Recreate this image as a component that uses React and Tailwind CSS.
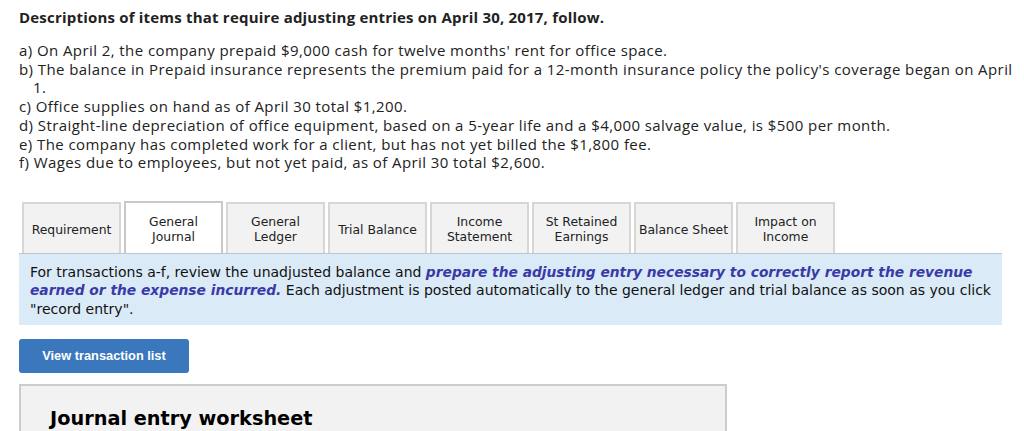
import React from 'react';

const items = [
  "a) On April 2, the company prepaid $9,000 cash for twelve months' rent for office space.",
  "b) The balance in Prepaid insurance represents the premium paid for a 12-month insurance policy the policy's coverage began on April 1.",
  'c) Office supplies on hand as of April 30 total $1,200.',
  'd) Straight-line depreciation of office equipment, based on a 5-year life and a $4,000 salvage value, is $500 per month.',
  'e) The company has completed work for a client, but has not yet billed the $1,800 fee.',
  'f) Wages due to employees, but not yet paid, as of April 30 total $2,600.',
];

const tabs = [
  ['Requirement'],
  ['General', 'Journal'],
  ['General', 'Ledger'],
  ['Trial Balance'],
  ['Income', 'Statement'],
  ['St Retained', 'Earnings'],
  ['Balance Sheet'],
  ['Impact on', 'Income'],
];

export default function App() {
  return (
    <div className="w-[1024px] h-[431px] overflow-hidden bg-white pl-[19px] pt-[7px]">
      <h1 className="text-[15px] tracking-[0.2px] leading-[20px] font-bold text-[#222] font-['Open_Sans',sans-serif]">
        Descriptions of items that require adjusting entries on April 30, 2017, follow.
      </h1>

      {/* item list */}
      <ul className="mt-[14px] w-[1005px] text-[15px] tracking-[0.42px] leading-[18.7px] text-[#222] font-['Open_Sans',sans-serif]">
        {items.map((t) => (
          <li key={t} className="pl-[14px] -indent-[14px]">{t}</li>
        ))}
      </ul>

      {/* tab strip */}
      <div className="mt-[29px] ml-[3px] flex items-end gap-[3px] font-['DejaVu_Sans',sans-serif] text-[12.4px] leading-[15px] text-[#222]">
        {tabs.map((lines, i) => {
          const active = i === 1;
          return (
            <div
              key={lines.join(' ')}
              className={
                active
                  ? 'w-[99px] h-[52px] pt-[2px] flex flex-col items-center justify-center text-center bg-white border-2 border-b-0 border-[#c8c8c8]'
                  : 'w-[99px] h-[51px] pt-[2px] flex flex-col items-center justify-center text-center bg-[#f2f2f2] border-2 border-b-0 border-[#d6d6d6]'
              }
            >
              {lines.map((l) => (
                <span key={l}>{l}</span>
              ))}
            </div>
          );
        })}
      </div>

      {/* instructions */}
      <div className="w-[983px] h-[72px] bg-[#dbeaf7] border-t border-[#b9c7d3] pl-[11px] pr-[6px] pt-[9px] text-[14px] leading-[18.5px] text-[#111] font-['DejaVu_Sans',sans-serif]">
        For transactions a-f, review the unadjusted balance and{' '}
        <b className="italic text-[13.8px] leading-[18.5px] text-[#3a3aa6]">
          prepare the adjusting entry necessary to correctly report the revenue earned or the expense incurred.
        </b>{'  '}Each adjustment is posted automatically to the general ledger and trial balance as soon as you click "record entry".
      </div>

      <button className="mt-[14px] w-[170px] h-[34px] rounded-[3px] bg-[#3a77bd] text-white text-[12.8px] font-bold font-['Liberation_Sans',sans-serif]">
        View transaction list
      </button>

      <div className="mt-[11px] w-[708px] h-[60px] bg-[#f2f2f2] border-2 border-[#cccccc] pl-[29px] pt-[19px]">
        <div className="text-[19.3px] font-bold text-black font-['DejaVu_Sans',sans-serif]">Journal entry worksheet</div>
      </div>
    </div>
  );
}
